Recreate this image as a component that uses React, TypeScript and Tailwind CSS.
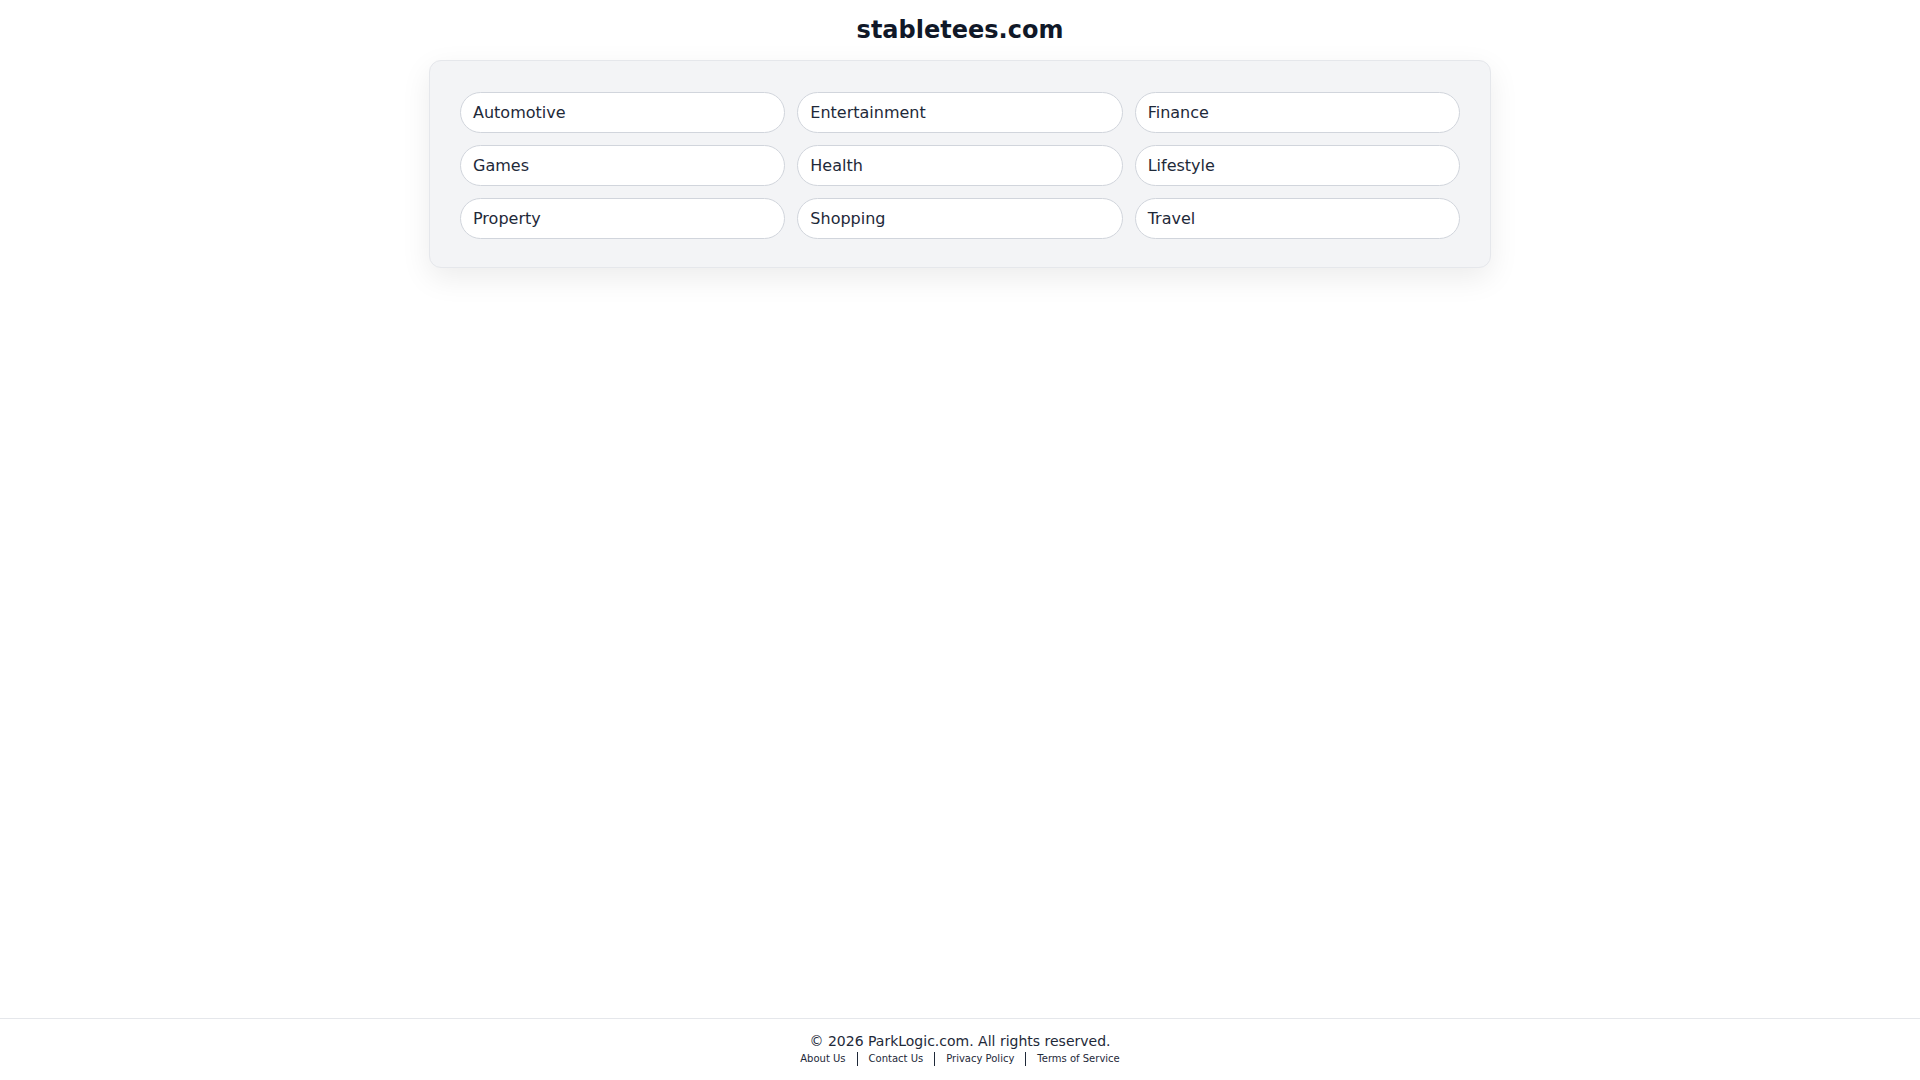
const categories = [
  'Automotive',
  'Entertainment',
  'Finance',
  'Games',
  'Health',
  'Lifestyle',
  'Property',
  'Shopping',
  'Travel',
];

const links = ['About Us', 'Contact Us', 'Privacy Policy', 'Terms of Service'];

export default function App() {
  return (
    <div className="min-h-screen flex flex-col bg-white font-['DejaVu_Sans',sans-serif] text-gray-800">
      <main className="flex-1 flex flex-col items-center pt-[14px]">
        <h1 className="text-2xl leading-8 font-bold text-gray-900">stabletees.com</h1>
        <section className="mt-[14px] w-[1062px] rounded-xl border border-gray-200 bg-gray-100 px-[30px] pt-[31px] pb-[28px] shadow-[0_10px_30px_rgba(0,0,0,0.08)]">
          <div className="grid grid-cols-3 gap-x-3 gap-y-3">
            {categories.map((name) => (
              <a
                key={name}
                href="#"
                className="flex h-[41px] items-center rounded-full border border-gray-300 bg-white px-3 pt-px text-base text-gray-800 hover:bg-gray-50"
              >
                {name}
              </a>
            ))}
          </div>
        </section>
      </main>

      <footer className="border-t border-gray-200 pt-3 pb-[13px] text-center">
        <p className="text-sm leading-5 text-gray-800">© 2026 ParkLogic.com. All rights reserved.</p>
        <nav className="flex h-4 items-center justify-center text-[10px] text-gray-800">
          {links.map((label, i) => (
            <span key={label} className="flex items-center">
              {i > 0 && <span className="mx-[11px] h-[14px] border-l border-gray-800" />}
              <a href="#" className="leading-4 hover:underline">
                {label}
              </a>
            </span>
          ))}
        </nav>
      </footer>
    </div>
  );
}
